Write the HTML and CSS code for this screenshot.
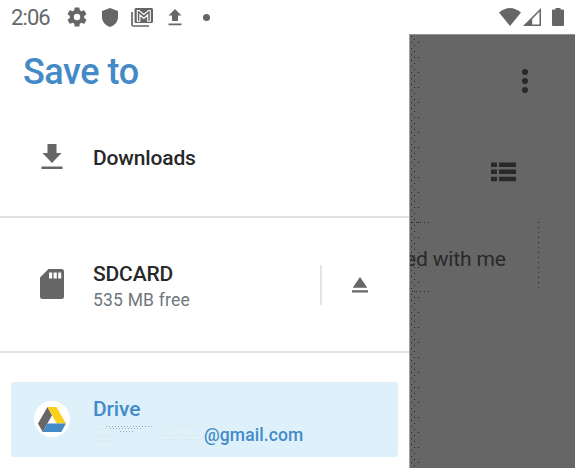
FILE: index.html
```html
<!DOCTYPE html>
<html lang="en">
<head>
<meta charset="utf-8">
<title>Save to</title>
<link rel="stylesheet" href="styles.css">
</head>
<body>
<header class="status">
  <span class="clock">2:06</span>
  <svg class="gear" width="20" height="20" viewBox="2 2 20 20"><path d="M19.14 12.94c.04-.3.06-.61.06-.94s-.02-.64-.07-.94l2.03-1.58a.49.49 0 0 0 .12-.61l-1.92-3.32a.49.49 0 0 0-.59-.22l-2.39.96a7 7 0 0 0-1.62-.94l-.36-2.54a.48.48 0 0 0-.48-.41h-3.84a.48.48 0 0 0-.47.41l-.36 2.54a7.3 7.3 0 0 0-1.62.94l-2.39-.96a.48.48 0 0 0-.59.22L2.73 8.87a.48.48 0 0 0 .12.61l2.03 1.58a6 6 0 0 0 0 1.88l-2.03 1.58a.49.49 0 0 0-.12.61l1.92 3.32c.12.22.37.29.59.22l2.39-.96c.5.38 1.03.7 1.62.94l.36 2.54c.05.24.24.41.48.41h3.84c.24 0 .44-.17.47-.41l.36-2.54a7.3 7.3 0 0 0 1.62-.94l2.39.96c.22.08.47 0 .59-.22l1.92-3.32a.48.48 0 0 0-.12-.61zM12 15.2a3.200 3.200 0 1 1 0-6.400 3.200 3.200 0 0 1 0 6.400z"/></svg>
  <svg class="shield" width="16" height="19" viewBox="0 0 16 19"><path d="M8 0l8 3v6c0 4.500-3.200 8.500-8 10C3.200 17.500 0 13.500 0 9V3z"/></svg>
  <svg class="mail" width="22" height="19" viewBox="0 0 22 19"><path d="M1 4v12.500q0 1.500 1.500 1.500H18" fill="none" stroke="#666" stroke-width="1.700"/><rect x="3.500" width="18.500" height="15" rx="1.500"/><path d="M6.300 13.300V2.500h1.800l4.700 4 4.700-4h1.800v10.800h-2.600V6.800l-3.900 3.700-3.900-3.700v6.500z" fill="none" stroke="#fff" stroke-width="1.100"/></svg>
  <svg class="upload" width="14" height="17" viewBox="0 0 14 17"><path d="M7 0l6.500 6.500H10V12H4V6.500H.5zM.5 14.500h13v1.800H.5z"/></svg>
  <span class="dot"></span>
  <svg class="wifi" width="22" height="18" viewBox="0 0 22 18"><path d="M0 4.500Q11-4.500 22 4.500L11 18z"/></svg>
  <svg class="signal" width="18" height="18" viewBox="0 0 18 18"><path fill-rule="evenodd" d="M0 18L18 0v18zM9.200 11v5.500h7.300V3.500z"/></svg>
  <svg class="battery" width="12" height="18" viewBox="0 0 12 18"><path d="M3.500 0h5v1.500H11q1 0 1 1V17q0 1-1 1H1q-1 0-1-1V2.500q0-1 1-1h2.500z"/></svg>
</header>
<main class="screen">
  <nav class="drawer">
    <h1>Save to</h1>
    <div class="row downloads">
      <svg class="icon" width="22" height="26" viewBox="0 0 22 26"><path d="M6.500 0h9v9h5L11 19 1.500 9h5zM.5 22.500h21V25H.5z"/></svg>
      <div class="name">Downloads</div>
    </div>
    <div class="row sdcard">
      <svg class="icon" width="24" height="30" viewBox="0 0 24 30"><path fill-rule="evenodd" d="M8.500 0H21.500Q24 0 24 2.500v25q0 2.500-2.500 2.500h-19Q0 30 0 27.500V8.500zM9 3.500v6h3.200v-6zm4.600 0v6h3.200v-6zm4.600 0v6h3v-6z"/></svg>
      <div class="text"><div class="name">SDCARD</div><div class="sub">535 MB free</div></div>
      <div class="eject"><svg width="16" height="16" viewBox="0 0 16 16"><path d="M8 0l7.300 10.800H.7zM0 13.200h16v2.300H0z"/></svg></div>
    </div>
    <div class="drive">
      <div class="disc"><svg width="28" height="25" viewBox="0 0 28 25"><path fill="#666" d="M9.500 0L0 16.500 4.700 25 14 8.300z"/><path fill="#fccf1b" d="M9.500 0H18.500L28 16.500h-9.300z"/><path fill="#448ac8" d="M9.500 16.500H28L23.300 25H4.700z"/></svg></div>
      <div class="text"><div class="name">Drive</div><div class="sub"><svg class="smudge" width="111" height="20" viewBox="0 0 111 20"><g fill="none" stroke="#dedfe0" stroke-dasharray="1 2"><path d="M0 2.500h14M2 7.500h9M0 13.500h20M0 18.500h22M71 3.500h40M67 13.500h44M70 17.500h36"/><path stroke="#91a9b9" d="M13 4.500h47M17 6.500h32M27 9.500h14"/></g></svg><span class="address">@gmail.com</span></div></div>
    </div>
  </nav>
  <section class="behind">
    <svg class="more" width="6" height="26" viewBox="0 0 6 26"><circle cx="3" cy="4" r="3"/><circle cx="3" cy="13" r="3"/><circle cx="3" cy="22" r="3"/></svg>
    <svg class="list" width="25" height="20" viewBox="0 0 25 20"><path d="M0 .5h6v4.500H0zM8 .5h17v4.500H8zM0 7.500h6V12H0zM8 7.500h17V12H8zM0 14.800h6v4.500H0zM8 14.800h17v4.500H8z"/></svg>
    <div class="card"><span>ed with me</span></div>
  </section>
</main>
</body>
</html>
```

FILE: styles.css
```css
* { box-sizing: border-box; }
body { margin: 0; width: 575px; height: 473px; overflow: hidden; background: #fff; font-family: Roboto, sans-serif; color: #262829; }
svg { display: block; flex: none; fill: #666; }
.status { display: flex; align-items: center; height: 34px; padding-left: 11px; }
.clock { width: 56px; padding-top: 2px; font-size: 22px; line-height: 34px; color: #66696b; letter-spacing: -.9px; white-space: nowrap; }
.shield { margin-left: 15px; }
.mail { margin-left: 13px; }
.upload { margin-left: 15px; }
.dot { width: 7px; height: 7px; margin-left: 21px; border-radius: 50%; background: #666; }
.wifi { margin-left: 289px; }
.signal { margin-left: 2px; }
.battery { margin-left: 11px; }
.screen { display: flex; height: 434px; }
.drawer { width: 409px; }
h1 { height: 66px; margin: 0; padding-left: 23px; font-size: 36px; line-height: 76px; font-weight: 500; letter-spacing: -.45px; color: #448ac8; white-space: nowrap; }
.row { display: flex; border-bottom: 2px solid #e1e1e1; }
.name { font-size: 21px; line-height: 26px; font-weight: 500; letter-spacing: -.15px; white-space: nowrap; }
.sub { font-size: 17.500px; line-height: 26px; letter-spacing: .2px; color: #70777c; white-space: nowrap; }
.downloads { height: 118px; padding: 44px 0 0 41px; }
.downloads .name { margin: 1px 0 0 30px; }
.sdcard { height: 135px; padding-left: 40px; }
.sdcard .icon { margin-top: 51px; }
.sdcard .text { width: 227px; margin: 43px 0 0 29px; }
.eject { height: 40px; margin-top: 47px; padding: 12px 0 0 30px; border-left: 2px solid #e1e5e7; }
.drive { display: flex; width: 387px; height: 75px; margin: 29px 0 0 11px; padding-left: 23px; border-radius: 3px; background: #def1fb; color: #448ac8; }
.disc { display: flex; align-items: center; justify-content: center; width: 36px; height: 36px; margin-top: 19px; border-radius: 50%; background: #fff; }
.drive .text { margin: 14px 0 0 23px; }
.drive .sub { display: flex; font-weight: 500; color: #448ac8; letter-spacing: .1px; }
.behind { flex: 1; overflow: hidden; border-left: 1px solid #99a2a8; border-top: 1px solid #8b9499; background:
  radial-gradient(circle at 1.500px 1.500px, #292929 .7px, transparent .8px) 0 0 / 9px 6px repeat-y,
  radial-gradient(circle at 4.500px 4.500px, #292929 .7px, transparent .8px) 0 0 / 9px 6px repeat-y,
  radial-gradient(circle at 8.500px 7.500px, #292929 .7px, transparent .8px) 0 0 / 10px 15px repeat-y,
  #666; }
.behind svg { fill: #292929; }
.more { margin: 33px 0 0 112px; }
.list { margin: 68px 0 0 81px; }
.card { width: 129px; height: 70px; margin-top: 40px; font-size: 21px; line-height: 74px; letter-spacing: -.15px; color: #292929; white-space: nowrap; background:
  linear-gradient(90deg, transparent 20px, #666 20px) 0 0 / 128px 1px no-repeat,
  linear-gradient(90deg, transparent 20px, #666 20px) 0 100% / 128px 1px no-repeat,
  linear-gradient(90deg, #292929 25%, transparent 25%) 2px 0 / 4px 1px repeat-x,
  linear-gradient(90deg, #292929 25%, transparent 25%) 2px 100% / 4px 1px repeat-x,
  linear-gradient(#292929 20%, transparent 20%) 100% 0 / 1px 5px repeat-y; }
.card span { margin-left: -5px; }
```
